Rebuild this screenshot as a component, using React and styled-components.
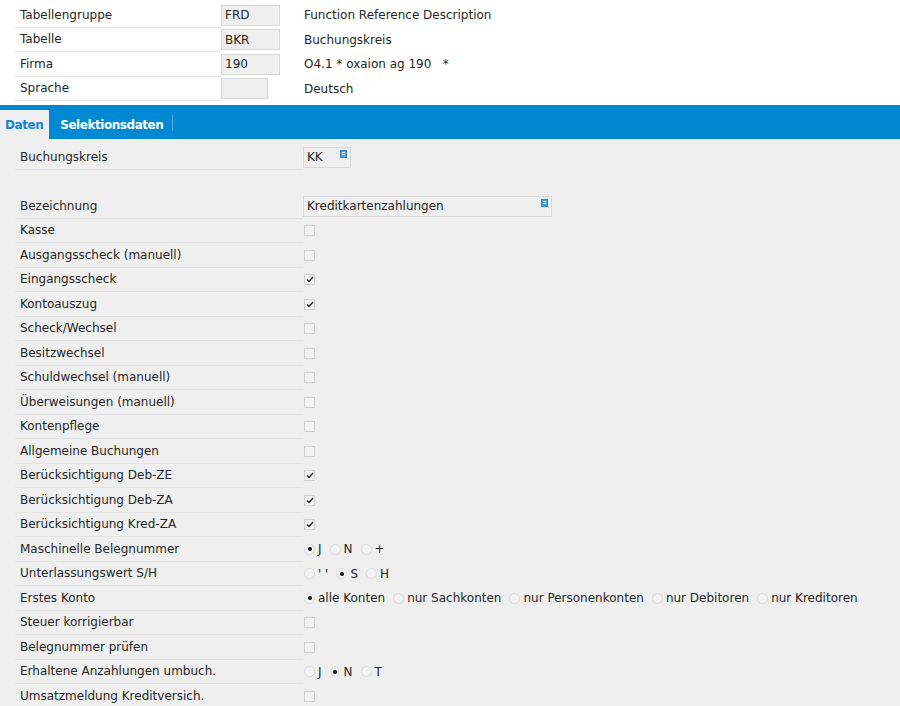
import React from "react";
import styled, { createGlobalStyle } from "styled-components";

const Global = createGlobalStyle`
  body {
    margin: 0;
    background: #efefef;
    font-family: "DejaVu Sans", Verdana, sans-serif;
    font-size: 12px;
    color: #262626;
  }
`;

const Page = styled.div`
  width: 900px;
  height: 706px;
  overflow: hidden;
  background: #efefef;
`;

const Header = styled.div`
  background: #fff;
  padding: 3px 0 4px 15px;
`;

const Row = styled.div`
  display: flex;
  align-items: center;
  height: 24.5px;
`;

const Label = styled.div`
  width: ${(p) => p.$w || 288}px;
  height: 100%;
  box-sizing: border-box;
  display: flex;
  align-items: center;
  padding-left: 5px;
  border-bottom: ${(p) => (p.$noLine ? "none" : "1px solid #e3e3e3")};
  white-space: nowrap;
`;

const Field = styled.div`
  position: relative;
  box-sizing: border-box;
  width: ${(p) => p.$w}px;
  height: 21px;
  display: flex;
  align-items: center;
  padding-left: 3px;
  background: #efefef;
  border: 1px solid #d6d6d6;
  margin-right: ${(p) => p.$mr || 0}px;
`;

const Desc = styled.div`
  white-space: pre;
`;

const ListIcon = styled.span`
  position: absolute;
  top: 2px;
  right: 3px;
  width: 5px;
  height: 6px;
  background: #4aa3e0;
  border: 0.5px solid #2f86c7;
  &::before,
  &::after {
    content: "";
    position: absolute;
    left: 1px;
    right: 1px;
    height: 1px;
    background: #dff0fb;
  }
  &::before {
    top: 1.5px;
  }
  &::after {
    top: 3.5px;
  }
`;

const TabBar = styled.div`
  display: flex;
  align-items: flex-end;
  height: 34px;
  background: #0088d2;
`;

const Tab = styled.div`
  height: 29px;
  display: flex;
  align-items: center;
  padding: 0 ${(p) => (p.$active ? 6 : 9)}px 0 ${(p) => (p.$active ? 5 : 11)}px;
  font-weight: bold;
  font-size: 12px;
  letter-spacing: -0.45px;
  color: ${(p) => (p.$active ? "#1287cf" : "#fff")};
  background: ${(p) => (p.$active ? "#efefef" : "transparent")};
`;

const TabSep = styled.div`
  width: 1px;
  height: 16px;
  margin-bottom: 8px;
  background: #4bb0e6;
`;

const Content = styled.div`
  padding: 6px 0 0 15px;
`;

const Box = styled.span`
  box-sizing: border-box;
  width: 11px;
  height: 11px;
  margin-left: 1px;
  border: 1px solid #cfcfcf;
  background: #f2f2f2;
  display: inline-flex;
  align-items: center;
  justify-content: center;
`;

const Radios = styled.div`
  display: flex;
  align-items: center;
  gap: 8px;
  padding-left: 1px;
`;

const RadioItem = styled.label`
  display: flex;
  align-items: center;
  gap: 3px;
  white-space: nowrap;
`;

const Circle = styled.span`
  box-sizing: border-box;
  width: 11px;
  height: 11px;
  border-radius: 50%;
  border: 1px solid #dadada;
  background: #f4f4f4;
  display: inline-flex;
  align-items: center;
  justify-content: center;
  &::after {
    content: "";
    width: 4px;
    height: 4px;
    border-radius: 50%;
    background: #111;
    display: ${(p) => (p.$on ? "block" : "none")};
  }
`;

const Check = ({ on }) => (
  <Box>
    {on && (
      <svg width="8" height="7" viewBox="0 0 8 7">
        <path d="M1 3.5 L3 5.5 L7 1" fill="none" stroke="#222" strokeWidth="1.4" />
      </svg>
    )}
  </Box>
);

const Radio = ({ options, value }) => (
  <Radios>
    {options.map((o) => (
      <RadioItem key={o}>
        <Circle $on={o === value} />
        {o}
      </RadioItem>
    ))}
  </Radios>
);

const headerRows = [
  ["Tabellengruppe", "FRD", 59, "Function Reference Description"],
  ["Tabelle", "BKR", 59, "Buchungskreis"],
  ["Firma", "190", 59, "O4.1 * oxaion ag 190   *"],
  ["Sprache", "", 47, "Deutsch"],
];

const checks = [
  ["Kasse", false],
  ["Ausgangsscheck (manuell)", false],
  ["Eingangsscheck", true],
  ["Kontoauszug", true],
  ["Scheck/Wechsel", false],
  ["Besitzwechsel", false],
  ["Schuldwechsel (manuell)", false],
  ["Überweisungen (manuell)", false],
  ["Kontenpflege", false],
  ["Allgemeine Buchungen", false],
  ["Berücksichtigung Deb-ZE", true],
  ["Berücksichtigung Deb-ZA", true],
  ["Berücksichtigung Kred-ZA", true],
];

export default function App() {
  return (
    <Page>
      <Global />
      <Header>
        {headerRows.map(([label, val, w, desc]) => (
          <Row key={label}>
            <Label $w={206}>{label}</Label>
            <Field $w={w} $mr={83 - w}>{val}</Field>
            <Desc>{desc}</Desc>
          </Row>
        ))}
      </Header>

      <TabBar>
        <Tab $active>Daten</Tab>
        <Tab>Selektionsdaten</Tab>
        <TabSep />
      </TabBar>

      <Content>
        <Row>
          <Label>Buchungskreis</Label>
          <Field $w={48}>
            KK
            <ListIcon />
          </Field>
        </Row>
        <Row>
          <Label $noLine />
        </Row>
        <Row>
          <Label>Bezeichnung</Label>
          <Field $w={249}>
            Kreditkartenzahlungen
            <ListIcon />
          </Field>
        </Row>
        {checks.map(([label, on]) => (
          <Row key={label}>
            <Label>{label}</Label>
            <Check on={on} />
          </Row>
        ))}
        <Row>
          <Label>Maschinelle Belegnummer</Label>
          <Radio options={["J", "N", "+"]} value="J" />
        </Row>
        <Row>
          <Label>Unterlassungswert S/H</Label>
          <Radio options={["' '", "S", "H"]} value="S" />
        </Row>
        <Row>
          <Label>Erstes Konto</Label>
          <Radio
            options={["alle Konten", "nur Sachkonten", "nur Personenkonten", "nur Debitoren", "nur Kreditoren"]}
            value="alle Konten"
          />
        </Row>
        <Row>
          <Label>Steuer korrigierbar</Label>
          <Check />
        </Row>
        <Row>
          <Label>Belegnummer prüfen</Label>
          <Check />
        </Row>
        <Row>
          <Label>Erhaltene Anzahlungen umbuch.</Label>
          <Radio options={["J", "N", "T"]} value="N" />
        </Row>
        <Row>
          <Label>Umsatzmeldung Kreditversich.</Label>
          <Check />
        </Row>
      </Content>
    </Page>
  );
}
